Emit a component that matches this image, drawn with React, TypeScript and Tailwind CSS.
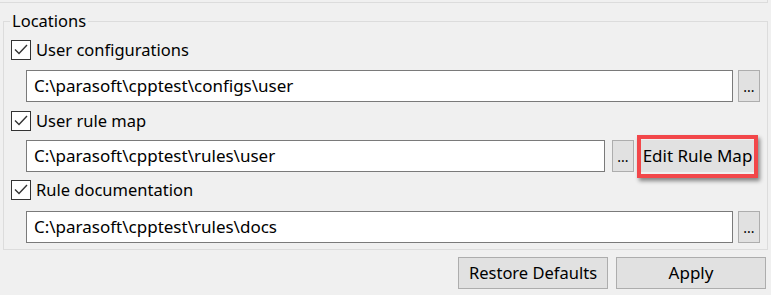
import React from "react";

const font = { fontFamily: '"Noto Sans", "Open Sans", sans-serif' };

function Check({ label }: { label: string }) {
  return (
    <div className="flex h-[20px] items-center">
      <div className="h-[20px] w-[20px] border border-[#333333] bg-white flex items-center justify-center">
        <svg width="18" height="18" viewBox="0 0 18 18">
          <polyline points="3,8.5 7,12.5 15,4" fill="none" stroke="#333" strokeWidth="1.4" />
        </svg>
      </div>
      <span className="ml-[5px] text-[16.5px] leading-[20px] text-black">{label}</span>
    </div>
  );
}

function Field({ value }: { value: string }) {
  return (
    <div className="flex-1 h-[32px] border border-[#7a7a7a] bg-white flex items-center pl-[7px] text-[17px] text-black">
      {value}
    </div>
  );
}

function Dots() {
  return (
    <div className="w-[22px] h-[32px] border border-[#adadad] bg-[#e1e1e1] flex items-end justify-center pb-[7px] text-[14px] leading-[14px] text-black">
      ...
    </div>
  );
}

export default function App() {
  return (
    <div className="w-[771px] h-[295px] bg-[#f0f0f0] overflow-hidden" style={font}>
      <div className="h-[3px] mr-[3px] border-b border-r border-[#dcdcdc]" />
      <fieldset className="mt-[7px] ml-[3px] mr-[3px] border border-[#dcdcdc] pl-[7px] pr-[7px] pt-[8px] pb-[6px]">
        <legend className="-ml-px px-[2px] text-[16.5px] leading-[22px] text-black">Locations</legend>
        <Check label="User configurations" />
        <div className="mt-[10px] ml-[15px] flex items-center gap-[5px]">
          <Field value="C:\parasoft\cpptest\configs\user" />
          <Dots />
        </div>
        <div className="mt-[9px]">
          <Check label="User rule map" />
        </div>
        <div className="mt-[9px] ml-[15px] mr-[6px] flex items-center">
          <Field value="C:\parasoft\cpptest\rules\user" />
          <div className="ml-[7px]">
            <Dots />
          </div>
          <div className="relative ml-[7px]">
            <div className="w-[113px] h-[32px] bg-[#e1e1e1] flex items-center justify-center text-[17px] text-black whitespace-nowrap">
              Edit Rule Map
            </div>
            <div className="absolute -top-[5px] -bottom-[6px] -left-[4px] -right-[4px] border-4 border-[#f2474a] shadow-[2px_3px_4px_rgba(0,0,0,0.45)]" />
          </div>
        </div>
        <div className="mt-[8px]">
          <Check label="Rule documentation" />
        </div>
        <div className="mt-[11px] ml-[15px] flex items-center gap-[5px]">
          <Field value="C:\parasoft\cpptest\rules\docs" />
          <Dots />
        </div>
      </fieldset>
      <div className="mt-[7px] mr-[5px] flex justify-end gap-[8px]">
        <div className="w-[150px] h-[32px] border border-[#adadad] bg-[#e1e1e1] flex items-center justify-center text-[16.5px] text-black">
          Restore Defaults
        </div>
        <div className="w-[150px] h-[32px] border border-[#adadad] bg-[#e1e1e1] flex items-center justify-center text-[17px] text-black">
          Apply
        </div>
      </div>
    </div>
  );
}
